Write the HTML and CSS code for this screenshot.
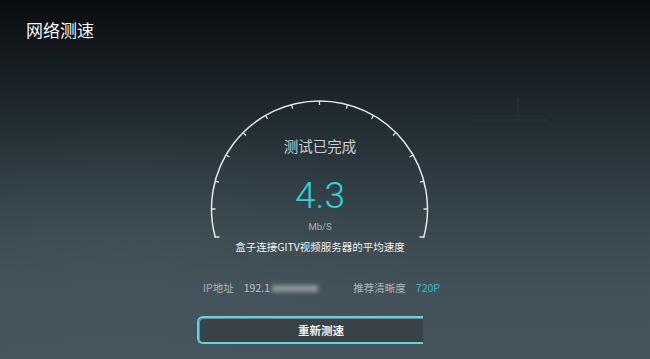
FILE: index.html
```html
<!DOCTYPE html>
<html lang="zh-CN">
<head>
<meta charset="utf-8">
<title>网络测速</title>
<link rel="stylesheet" href="styles.css">
</head>
<body>
<div class="screen">
  <svg class="deco" width="80" height="26" viewBox="0 0 80 26"><path d="M0 24 H76 M46 24 V2" stroke="#2a363c" stroke-width="1" fill="none"/></svg>
  <h1 class="title">网络测速</h1>
  <div class="gauge">
    <svg class="dial" width="230" height="150" viewBox="0 0 230 150">
      <g stroke="#e2e7e9" stroke-width="1.5" fill="none" stroke-linecap="round">
        <path d="M10.2 142 A108 108 0 1 1 218.8 142"/>
        <path d="M10.2 142 H14 M218.8 142 H215"/>
      </g>
      <g stroke="#dfe4e6" stroke-width="1.3" fill="none">
        <path d="M114.5 6 V10 M86.55 9.7 L87.6 13.6 M142.45 9.7 L141.4 13.6 M60.5 20.47 L62.5 23.9 M168.5 20.47 L166.5 23.9 M38.13 37.63 L40.95 40.45 M190.87 37.63 L188.05 40.45 M20.97 60 L24.4 62 M208.03 60 L204.6 62 M10.2 86.05 L14 87.1 M218.8 86.05 L215 87.1 M6.5 114 H10.5 M222.5 114 H218.5"/>
      </g>
    </svg>
    <div class="status">测试已完成</div>
    <div class="speed">4.3</div>
    <div class="unit">Mb/S</div>
    <div class="caption">盒子连接GITV视频服务器的平均速度</div>
  </div>
  <div class="info">
    <div class="info-group">
      <span class="label">IP地址</span>
      <span class="value">192.1<span class="masked"></span></span>
    </div>
    <div class="info-group">
      <span class="label">推荐清晰度</span>
      <span class="accent">720P</span>
    </div>
  </div>
  <div class="retest">重新测速</div>
</div>
</body>
</html>
```

FILE: styles.css
```css
* { box-sizing: border-box; }
html, body { margin: 0; padding: 0; }
body {
  width: 650px;
  height: 359px;
  overflow: hidden;
  font-family: "Noto Sans CJK SC", "Noto Sans", sans-serif;
}
.screen {
  position: relative;
  width: 650px;
  height: 359px;
  overflow: hidden;
  background:
    radial-gradient(ellipse 420px 200px at 120px 260px, rgba(80, 96, 104, 0.25), rgba(80, 96, 104, 0) 70%),
    linear-gradient(180deg, #0a0d10 0%, #141b1f 15%, #1f292e 30%, #2d3a41 48%, #3b4950 66%, #43515a 82%, #46545b 100%);
}
.deco {
  position: absolute;
  left: 472px;
  top: 96px;
}
.title {
  margin: 0;
  padding: 19px 0 0 26px;
  font-size: 17px;
  line-height: 22px;
  font-weight: normal;
  color: #f2f4f5;
}
.gauge {
  position: relative;
  margin: 54px 0 0 205px;
  width: 230px;
  padding-top: 41px;
  display: flex;
  flex-direction: column;
  align-items: center;
}
.dial {
  position: absolute;
  left: 0;
  top: 0;
}
.status {
  font-size: 14.5px;
  line-height: 20px;
  color: #c9cfd2;
}
.speed {
  margin-top: 20px;
  font-family: Roboto, "Noto Sans", sans-serif;
  font-weight: 300;
  font-size: 37px;
  line-height: 40px;
  color: #2fd3df;
}
.unit {
  margin-top: 5px;
  font-family: Roboto, "Noto Sans", sans-serif;
  font-size: 9.5px;
  line-height: 12px;
  color: #a9b2b6;
}
.caption {
  margin-top: 7px;
  font-size: 10.5px;
  line-height: 14px;
  color: #eef1f2;
  white-space: nowrap;
}
.info {
  margin: 27px 0 0 203px;
  width: 237px;
  display: flex;
  justify-content: space-between;
  font-size: 10.5px;
  line-height: 14px;
}
.info-group {
  display: flex;
  align-items: center;
  gap: 10px;
}
.label { color: #adb6ba; }
.value {
  display: flex;
  align-items: center;
  color: #b9c1c4;
}
.masked {
  display: inline-block;
  width: 46px;
  height: 7px;
  margin-left: 2px;
  background: #9aa3a7;
  filter: blur(2px);
  opacity: 0.85;
}
.accent { color: #3cbfca; }
.retest {
  margin: 21px 0 0 197px;
  width: 226px;
  height: 28px;
  border: 2px solid #5fd5df;
  border-right: none;
  border-radius: 6px 0 0 6px;
  background: #384247;
  box-shadow: inset 1px 1px 0 rgba(255, 255, 255, 0.35);
  display: flex;
  align-items: center;
  justify-content: center;
  padding-left: 20px;
  font-size: 11.5px;
  font-weight: bold;
  color: #eef1f2;
}
```
